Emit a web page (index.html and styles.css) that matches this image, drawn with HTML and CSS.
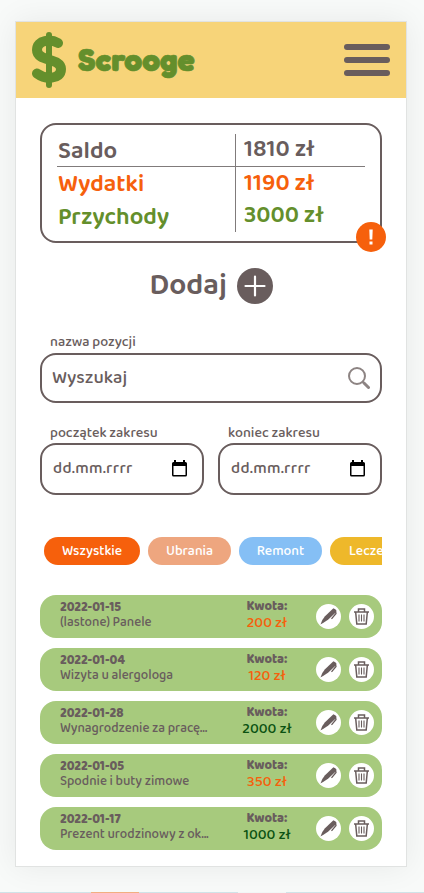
FILE: index.html
```html
<!DOCTYPE html>
<html lang="pl">
<head>
<meta charset="utf-8">
<title>Scrooge</title>
<link rel="stylesheet" href="styles.css">
</head>
<body>
<svg class="defs" width="0" height="0" aria-hidden="true">
  <symbol id="pen" viewBox="0 0 25 25">
    <path d="M4.500 20.500 L6.300 16 L9 12.300 L15.800 5.800 L17.500 4.300 L20.300 6 L20 8.300 L12 15.800 L7.800 18.500 Z" fill="#695d5d"/>
    <path d="M19.500 7 L20 9.500 L15.500 14.800" fill="none" stroke="#695d5d" stroke-width="1.300"/>
  </symbol>
  <symbol id="bin" viewBox="0 0 25 25">
    <g fill="none" stroke="#695d5d" stroke-width="1.500">
      <path d="M5 8 H20 M9.500 7.500 V5 H15.500 V7.500 M6.700 8.500 L7.800 20 H17.200 L18.300 8.500"/>
      <path d="M10 10.500 V17.500 M12.500 10.500 V17.500 M15 10.500 V17.500" stroke-width="1.100"/>
    </g>
  </symbol>
  <symbol id="calendar" viewBox="0 0 15 17">
    <path fill-rule="evenodd" d="M1.500 2 H2 V0 H4 V2 H11 V0 H13 V2 H13.500 Q15 2 15 3.500 V15 Q15 16.500 13.500 16.500 H1.500 Q0 16.500 0 15 V3.500 Q0 2 1.500 2 Z M1.500 6 V15 H13.500 V6 Z"/>
  </symbol>
</svg>
<main class="card">
  <header class="header">
    <svg class="dollar" viewBox="0 0 34 56" fill="none" stroke="#648f2c" stroke-linecap="round">
      <path d="M17 3 V53" stroke-width="6"/>
      <path d="M26 11 C19 7 5 7.500 5 18 C5 30 29 25.500 29 37 C29 48 13 47.500 5 41.500" stroke-width="10"/>
    </svg>
    <span class="brand">Scrooge</span>
    <div class="burger"><i></i><i></i><i></i></div>
  </header>

  <section class="summary">
    <div class="names">
      <span>Saldo</span>
      <span class="out">Wydatki</span>
      <span class="in">Przychody</span>
    </div>
    <div class="sums">
      <span>1810 zł</span>
      <span class="out">1190 zł</span>
      <span class="in">3000 zł</span>
    </div>
    <div class="alert">
      <svg viewBox="0 0 30 30"><path d="M13.300 7.500 H16.700 L16.300 17.500 H13.700 Z M13.500 19.500 H16.500 V22.500 H13.500 Z" fill="#fff"/></svg>
    </div>
  </section>

  <div class="add">
    <span>Dodaj</span>
    <svg viewBox="0 0 36 36"><circle cx="18" cy="18" r="18" fill="#695d5d"/><path d="M8.500 18 H27.500 M18 8.500 V27.500" stroke="#fff" stroke-width="2.200" stroke-linecap="round"/></svg>
  </div>

  <div class="field">
    <label class="label">nazwa pozycji</label>
    <div class="input search">
      <span>Wyszukaj</span>
      <svg viewBox="0 0 22 22" fill="none" stroke="#8d8483"><circle cx="9" cy="9" r="8" stroke-width="2"/><path d="M14.500 14.500 L16 16" stroke-width="2"/><path d="M16 16 L20.500 20.500" stroke-width="3" stroke-linecap="round"/></svg>
    </div>
  </div>

  <div class="dates">
    <div class="field">
      <label class="label">początek zakresu</label>
      <div class="input date"><span>dd.mm.rrrr</span><svg><use href="#calendar"/></svg></div>
    </div>
    <div class="field">
      <label class="label">koniec zakresu</label>
      <div class="input date"><span>dd.mm.rrrr</span><svg><use href="#calendar"/></svg></div>
    </div>
  </div>

  <nav class="chips">
    <span class="chip all">Wszystkie</span>
    <span class="chip clothes">Ubrania</span>
    <span class="chip repair">Remont</span>
    <span class="chip health">Leczenie</span>
  </nav>

  <ul class="list">
    <li class="row">
      <div class="info"><b>2022-01-15</b><span>(lastone) Panele</span></div>
      <div class="amount"><b>Kwota:</b><span class="out">200 zł</span></div>
      <svg class="action"><use href="#pen"/></svg><svg class="action"><use href="#bin"/></svg>
    </li>
    <li class="row">
      <div class="info"><b>2022-01-04</b><span>Wizyta u alergologa</span></div>
      <div class="amount"><b>Kwota:</b><span class="out">120 zł</span></div>
      <svg class="action"><use href="#pen"/></svg><svg class="action"><use href="#bin"/></svg>
    </li>
    <li class="row">
      <div class="info"><b>2022-01-28</b><span>Wynagrodzenie za pracę...</span></div>
      <div class="amount"><b>Kwota:</b><span class="income">2000 zł</span></div>
      <svg class="action"><use href="#pen"/></svg><svg class="action"><use href="#bin"/></svg>
    </li>
    <li class="row">
      <div class="info"><b>2022-01-05</b><span>Spodnie i buty zimowe</span></div>
      <div class="amount"><b>Kwota:</b><span class="out">350 zł</span></div>
      <svg class="action"><use href="#pen"/></svg><svg class="action"><use href="#bin"/></svg>
    </li>
    <li class="row">
      <div class="info"><b>2022-01-17</b><span>Prezent urodzinowy z ok...</span></div>
      <div class="amount"><b>Kwota:</b><span class="income">1000 zł</span></div>
      <svg class="action"><use href="#pen"/></svg><svg class="action"><use href="#bin"/></svg>
    </li>
  </ul>
</main>
<footer class="strip"><i class="orange"></i><i class="pale"></i></footer>
</body>
</html>
```
FILE: styles.css
```css
* { box-sizing: border-box; }
body {
  margin: 0;
  height: 893px;
  overflow: hidden;
  background: #f8faf9;
  color: #695d5d;
  font-family: "Baloo 2", "Noto Sans", sans-serif;
  font-weight: 500;
  display: flex;
  flex-direction: column;
}
.defs { position: absolute; }
.card {
  width: 392px;
  height: 846px;
  flex: none;
  margin: 21px 0 0 15px;
  border: 1px solid #e1e3e2;
  background: #fff;
  box-shadow: 0 0 30px rgba(0, 0, 0, .07);
  overflow: hidden;
}
.header {
  height: 76px;
  background: #f7d479;
  display: flex;
  align-items: center;
  padding: 0 16px;
}
.dollar { width: 34px; height: 56px; }
.brand {
  margin-left: 12px;
  font: 700 32px/38px "Fredoka One", "Fredoka", "Baloo 2", "Open Sans", sans-serif;
  color: #648f2c;
  -webkit-text-stroke: .7px #648f2c;
}
.burger {
  margin-left: auto;
  display: flex;
  flex-direction: column;
  gap: 7px;
}
.burger i { width: 46px; height: 6px; border-radius: 3px; background: #695d5d; }
.summary {
  position: relative;
  width: 342px;
  height: 120px;
  margin: 25px 24px 0;
  padding: 9px 15px;
  border: 2px solid #695d5d;
  border-radius: 16px;
  display: flex;
  font-size: 24px;
  line-height: 33px;
  font-weight: 600;
}
.names, .sums { display: flex; flex-direction: column; }
.names span, .sums span { flex: none; height: 33px; }
.names { width: 178px; }
.names span { padding-left: 1px; line-height: 35px; }
.names span:first-child, .sums span:first-child { border-bottom: 1px solid #807b7b; }
.sums { width: 130px; height: 98px; border-left: 1px solid #807b7b; }
.sums span { padding-left: 8px; }
.sums span:first-child { line-height: 31px; }
.sums span:last-child { line-height: 31px; }
.out { color: #f6600c; }
.in { color: #648f2c; }
.income { color: #0b5212; }
.alert {
  position: absolute;
  right: -6px;
  bottom: -11px;
  width: 30px;
  height: 30px;
  border-radius: 50%;
  background: #f6600c;
}
.alert svg { display: block; }
.add {
  height: 36px;
  margin-top: 25px;
  padding-left: 133.5px;
  display: flex;
  align-items: center;
  font-size: 30px;
  line-height: 36px;
  font-weight: 600;
}
.add span { width: 87.5px; }
.add svg { width: 36px; height: 36px; }
.field { display: flex; flex-direction: column; }
.card > .field { margin: 29px 24px 0; }
.label { padding-left: 10px; font-size: 14.2px; line-height: 18px; height: 20px; }
.input {
  height: 50px;
  border: 2px solid #695d5d;
  border-radius: 16px;
  padding: 0 10px;
  display: flex;
  align-items: center;
  justify-content: space-between;
  font-size: 18.4px;
}
.search svg { width: 22px; height: 22px; }
.dates { display: flex; gap: 14px; margin: 21px 24px 0; }
.dates .field { width: 164px; }
.dates .label { height: 19px; }
.date { height: 52px; padding: 0 15px 2px 11px; font-size: 16.4px; letter-spacing: .4px; }
.date svg { width: 15px; height: 17px; }
.chips {
  margin: 42px 24px 0;
  padding-left: 4px;
  display: flex;
  gap: 8px;
  overflow: hidden;
}
.chip {
  flex: none;
  height: 28px;
  width: 83px;
  border-radius: 14px;
  color: #fff;
  font-size: 13.8px;
  line-height: 28px;
  text-align: center;
}
.all { width: 96px; background: #f6600c; }
.clothes { background: #eea67f; }
.repair { background: #85bff5; }
.health { width: 91px; background: #eeb82a; }
.list {
  list-style: none;
  margin: 30px 24px 0;
  padding: 0;
  display: flex;
  flex-direction: column;
  gap: 10px;
}
.row {
  height: 43px;
  border-radius: 16px;
  background: #a7ca7d;
  display: flex;
  align-items: center;
  padding: 0 8px 0 20px;
}
.info, .amount { display: flex; flex-direction: column; white-space: nowrap; }
.info { width: 170px; font-size: 13.25px; line-height: 15px; padding-bottom: 3px; }
.info b, .amount b { font-weight: 800; font-size: 12.9px; }
.amount { width: 74px; align-items: center; font-size: 15px; line-height: 16px; padding-bottom: 3px; }
.action { flex: none; width: 25px; height: 25px; border-radius: 50%; background: #fff; margin-left: 12px; }
.action + .action { margin-left: 8px; }
.strip { height: 1px; margin-top: 25px; background: #cfe3e8; display: flex; }
.strip i { width: 48px; height: 1px; }
.orange { margin-left: 91px; background: #f2ae80; }
.pale { margin-left: 99px; background: #f1f6f6; }
```
